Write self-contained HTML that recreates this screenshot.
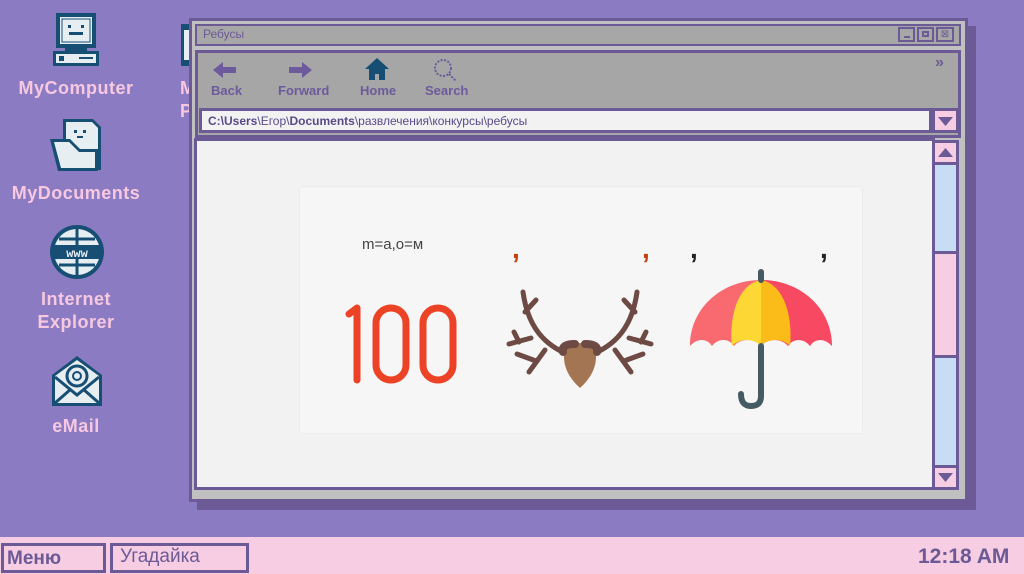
<!DOCTYPE html>
<html><head><meta charset="utf-8">
<style>
*{margin:0;padding:0;box-sizing:border-box}
body{width:1024px;height:574px;overflow:hidden;background:#8b7bc2;position:relative;font-family:"Liberation Sans","DejaVu Sans",sans-serif}
.lbl{position:absolute;color:#f7c8e0;font-weight:bold;font-size:18px;text-align:center;font-family:"Liberation Sans Narrow","Liberation Sans",sans-serif;letter-spacing:0.5px;line-height:23px}
.abs{position:absolute}
.tb{font-family:"Liberation Sans Narrow","Liberation Sans",sans-serif;font-weight:bold;color:#6c5a9c;font-size:13px}
</style></head><body>

<!-- desktop icons -->
<svg class="abs" style="left:51px;top:13px" width="50" height="53" viewBox="0 0 50 53">
<rect x="5" y="0" width="40" height="35" fill="#174e74"/>
<rect x="9" y="4" width="32" height="27" fill="#e6eef2"/>
<rect x="11" y="6" width="28" height="23" fill="none" stroke="#174e74" stroke-width="1"/>
<rect x="17" y="12" width="3" height="3" fill="#174e74"/><rect x="30" y="12" width="3" height="3" fill="#174e74"/>
<rect x="18" y="19" width="14" height="3" fill="#174e74"/>
<rect x="14" y="35" width="22" height="4" fill="#174e74"/>
<rect x="2" y="38" width="46" height="15" fill="#174e74"/>
<rect x="5" y="41" width="40" height="9" fill="#e6eef2"/>
<rect x="8" y="43" width="5" height="5" fill="#174e74"/><rect x="28" y="44" width="14" height="2" fill="#174e74"/>
</svg>
<div class="lbl" style="left:10px;top:77px;width:132px">MyComputer</div>

<svg class="abs" style="left:50px;top:119px" width="54" height="54" viewBox="0 0 54 54">
<path d="M13 0h30l8 8v43H13z" fill="#174e74"/>
<path d="M16 3h26l6 6v39H16z" fill="#e6eef2"/>
<path d="M0 20h20l10 10l18 0l0 22H8z" fill="#174e74"/>
<path d="M4 23h15l10 10l16 0l0 16H11z" fill="#e6eef2"/>
<rect x="24" y="11" width="3" height="3" fill="#174e74"/><rect x="33" y="11" width="3" height="3" fill="#174e74"/><rect x="27" y="17" width="6" height="2" fill="#174e74"/>
</svg>
<div class="lbl" style="left:5px;top:182px;width:142px">MyDocuments</div>

<svg class="abs" style="left:49px;top:224px" width="56" height="56" viewBox="0 0 56 56">
<circle cx="28" cy="28" r="27" fill="#174e74"/>
<circle cx="28" cy="28" r="23" fill="#e6eef2"/>
<path d="M5 28h46M28 5v46M10 15h36M10 41h36" stroke="#174e74" stroke-width="3"/>
<rect x="3" y="21" width="50" height="14" fill="#174e74"/>
<text x="28" y="33" font-size="12" fill="#e6eef2" text-anchor="middle" font-family="Liberation Mono" font-weight="bold">www</text>
</svg>
<div class="lbl" style="left:20px;top:288px;width:112px">Internet<br>Explorer</div>

<svg class="abs" style="left:50px;top:355px" width="54" height="52" viewBox="0 0 54 52">
<path d="M2 20L27 1l25 19v31H2z" fill="#174e74"/>
<path d="M5 21L27 5l22 16v27H5z" fill="#e6eef2"/>
<circle cx="27" cy="21" r="10" fill="none" stroke="#174e74" stroke-width="3"/>
<circle cx="27" cy="21" r="4" fill="none" stroke="#174e74" stroke-width="2"/>
<path d="M5 48l16-14M49 48L33 34M5 22l22 18 22-18" stroke="#174e74" stroke-width="3" fill="none"/>
</svg>
<div class="lbl" style="left:20px;top:415px;width:112px">eMail</div>

<!-- partial hidden icon -->
<div class="abs" style="left:181px;top:24px;width:10px;height:42px;background:#174e74"></div>
<div class="abs" style="left:184px;top:30px;width:6px;height:30px;background:#e6eef2"></div>
<div class="lbl" style="left:180px;top:77px;width:20px;text-align:left">M<br>P</div>

<!-- window shadow -->
<div class="abs" style="left:197px;top:26px;width:779px;height:484px;background:#6c5a96"></div>
<div class="abs" style="left:189px;top:18px;width:779px;height:484px;background:#c0c0c0;border:3px solid #6c5a96"></div>
<div class="abs" style="left:195px;top:24px;width:766px;height:22px;background:#a7a7a7;border:2px solid #6c5a96"></div>
<div class="abs" style="left:203px;top:27px;font-size:12px;color:#6c5a96">Ребусы</div>
<div class="abs" style="left:898px;top:27px;width:17px;height:15px;border:2px solid #6c5a96;background:#a7a7a7"><div style="position:absolute;left:4px;bottom:2px;width:6px;height:2px;background:#6c5a96"></div></div>
<div class="abs" style="left:917px;top:27px;width:17px;height:15px;border:2px solid #6c5a96;background:#a7a7a7"><div style="position:absolute;left:3px;top:2px;width:7px;height:6px;border:2px solid #6c5a96"></div></div>
<div class="abs" style="left:936px;top:27px;width:18px;height:15px;border:2px solid #6c5a96;background:#a7a7a7;font-size:10px;color:#6c5a96;line-height:11px;text-align:center">⊠</div>

<!-- toolbar panel -->
<div class="abs" style="left:195px;top:50px;width:766px;height:88px;background:#a6a6a6;border:3px solid #6c5a96"></div>
<svg class="abs" style="left:212px;top:60px" width="26" height="20" viewBox="0 0 26 20"><path d="M1 10L11 2v5h13v6H11v5z" fill="#6c5a9c"/></svg>
<div class="abs tb" style="left:211px;top:83px">Back</div>
<svg class="abs" style="left:287px;top:60px" width="26" height="20" viewBox="0 0 26 20"><path d="M25 10L15 2v5H2v6h13v5z" fill="#6c5a9c"/></svg>
<div class="abs tb" style="left:278px;top:83px">Forward</div>
<svg class="abs" style="left:364px;top:57px" width="26" height="24" viewBox="0 0 26 24"><path d="M13 1L1 12h4v11h6v-6h4v6h6V12h4z" fill="#174e74"/></svg>
<div class="abs tb" style="left:360px;top:83px">Home</div>
<svg class="abs" style="left:432px;top:58px" width="28" height="26" viewBox="0 0 28 26"><circle cx="11" cy="10" r="8" fill="none" stroke="#6c5a9c" stroke-width="2" stroke-dasharray="2 1.5"/><path d="M17 16l7 7" stroke="#6c5a9c" stroke-width="2" stroke-dasharray="2 1.5"/></svg>
<div class="abs tb" style="left:425px;top:83px">Search</div>
<div class="abs" style="left:935px;top:54px;font-size:16px;color:#6c5a96;font-weight:bold;letter-spacing:-4px">»</div>

<!-- address -->
<div class="abs" style="left:199px;top:108px;width:733px;height:25px;background:#f2f2f3;border:3px solid #6c5a96"></div>
<div class="abs" style="left:208px;top:114px;font-size:12px;color:#5a4a88;font-family:'Liberation Sans Narrow','Liberation Sans',sans-serif"><b>C:\Users</b>\Егор\<b>Documents</b>\развлечения\конкурсы\ребусы</div>
<div class="abs" style="left:932px;top:108px;width:27px;height:25px;background:#f6cde2;border:3px solid #6c5a96"><svg width="21" height="19" viewBox="0 0 21 19"><path d="M3 6h15l-7.5 9z" fill="#6c5a96"/></svg></div>

<!-- content -->
<div class="abs" style="left:194px;top:138px;width:741px;height:352px;background:#f2f2f3;border:3px solid #6c5a96"></div>
<div class="abs" style="left:299px;top:186px;width:564px;height:248px;background:#f6f6f6;border:1px solid #ececec;border-radius:3px"></div>
<div class="abs" style="left:362px;top:236px;font-size:15px;color:#444">m=a,o=м</div>
<div class="abs" style="left:512px;top:233px;font-size:28px;color:#c0400e;font-weight:bold">,</div>
<div class="abs" style="left:642px;top:233px;font-size:28px;color:#c0400e;font-weight:bold">,</div>
<div class="abs" style="left:690px;top:233px;font-size:28px;color:#222;font-weight:bold">,</div>
<div class="abs" style="left:820px;top:233px;font-size:28px;color:#222;font-weight:bold">,</div>
<svg class="abs" style="left:340px;top:300px" width="125" height="88" viewBox="0 0 125 88">
<g fill="none" stroke="#ec4326" stroke-width="7" stroke-linecap="round" stroke-linejoin="round">
<path d="M9 14l8-6v72"/>
<rect x="36" y="8" width="30" height="72" rx="15"/>
<rect x="83" y="8" width="30" height="72" rx="15"/>
</g></svg>
<svg class="abs" style="left:505px;top:288px" width="150" height="104" viewBox="0 0 150 104">
<g fill="none" stroke="#6e4a44" stroke-width="5" stroke-linecap="round">
<path d="M66 68C48 60 24 48 18 4M20 24L31 12M26 50L4 56M14 54L9 44M40 62L24 84M31 73L12 66"/>
<path d="M84 68C102 60 126 48 132 4M130 24L119 12M124 50L146 56M136 54L141 44M110 62L126 84M119 73L138 66"/>
</g>
<path d="M60 60q15-10 30 0q5 22-15 40q-20-18-15-40z" fill="#a47552"/>
<path d="M58 64q-2-8 12-8M92 64q2-8-12-8" stroke="#6e4a44" stroke-width="8" fill="none" stroke-linecap="round"/>
</svg>
<svg class="abs" style="left:688px;top:268px" width="146" height="146" viewBox="0 0 146 146">
<defs>
<path id="can" d="M73 12C34 12 2 40 2 78c7-8 17-8 22 0c6-8 17-8 22 0c6-8 21-8 27 0c6-8 21-8 27 0c5-8 16-8 22 0c5-8 15-8 22 0C144 40 112 12 73 12z"/>
<clipPath id="r"><rect x="73" y="0" width="80" height="100"/></clipPath>
</defs>
<use href="#can" fill="#f86a6f"/>
<use href="#can" fill="#f74a62" clip-path="url(#r)"/>
<path d="M73 12C50 16 41 48 44 78c7-8 22-8 29 0z" fill="#fdd835"/>
<path d="M73 12C96 16 105 48 102 78c-7-8-22-8-29 0z" fill="#fbbc1a"/>
<path d="M73 12v-8M73 78v50q0 10-10 10q-10 0-10-12" stroke="#465a63" stroke-width="6" fill="none" stroke-linecap="round"/>
</svg>

<!-- scrollbar -->
<div class="abs" style="left:932px;top:140px;width:27px;height:350px;background:#c7dcf5;border:3px solid #6c5a96"></div>
<div class="abs" style="left:932px;top:140px;width:27px;height:25px;background:#f6cde2;border:3px solid #6c5a96"><svg width="21" height="19" viewBox="0 0 21 19"><path d="M3 14h15l-7.5-9z" fill="#6c5a96"/></svg></div>
<div class="abs" style="left:932px;top:251px;width:27px;height:107px;background:#f6cde2;border:3px solid #6c5a96"></div>
<div class="abs" style="left:932px;top:465px;width:27px;height:25px;background:#f6cde2;border:3px solid #6c5a96"><svg width="21" height="19" viewBox="0 0 21 19"><path d="M3 5h15l-7.5 9z" fill="#6c5a96"/></svg></div>

<!-- taskbar -->
<div class="abs" style="left:0;top:537px;width:1024px;height:37px;background:#f6cde2"></div>
<div class="abs" style="left:1px;top:543px;width:105px;height:30px;border:3px solid #6c5a96;font-size:19px;color:#6c5a96;font-weight:bold;padding-left:3px;line-height:26px;font-family:'Liberation Sans Narrow','Liberation Sans',sans-serif">Меню</div>
<div class="abs" style="left:110px;top:543px;width:139px;height:30px;border:3px solid #6c5a96;font-size:19px;color:#6c5a96;padding-left:7px;line-height:22px;font-family:'Liberation Sans Narrow','Liberation Sans',sans-serif">Угадайка</div>
<div class="abs" style="left:918px;top:545px;font-size:21px;color:#6c5a96;font-weight:bold;font-family:'Liberation Sans Narrow','Liberation Sans',sans-serif">12:18 AM</div>
</body></html>
